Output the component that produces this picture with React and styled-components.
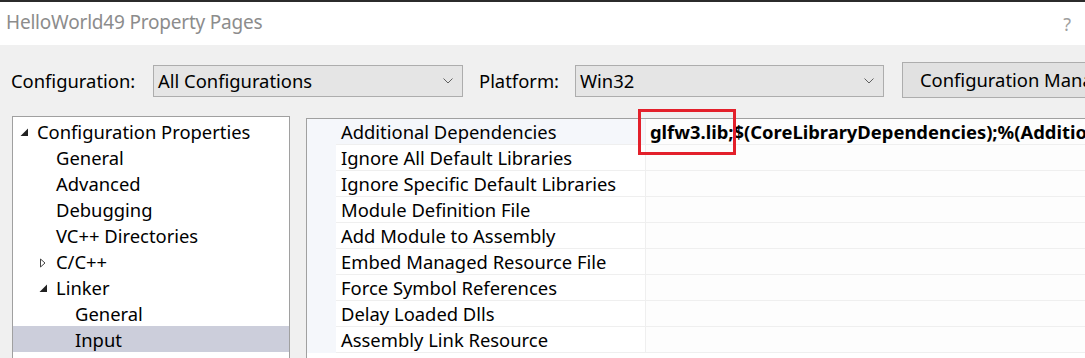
import React from "react";
import styled, { createGlobalStyle } from "styled-components";

const GlobalStyle = createGlobalStyle`
  html, body { margin: 0; padding: 0; background: #f0f0f0; }
  body { font-family: "Noto Sans", "Open Sans", sans-serif; color: #000; }
`;

const Window = styled.div`
  width: 1085px;
  height: 358px;
  overflow: hidden;
  background: #f0f0f0;
  display: flex;
  flex-direction: column;
`;

const TitleBar = styled.div`
  height: 43px;
  flex: none;
  background: #fff;
  border-top: 2px solid #2b2b2b;
  display: flex;
  align-items: center;
  justify-content: space-between;
  padding: 0 14px 0 6px;
`;

const Title = styled.div`
  font-size: 19px;
  letter-spacing: -0.2px;
  color: #8c8c8c;
  margin-top: -3px;
`;

const Help = styled.div`
  font-size: 18px;
  color: #a0a0a0;
`;

const Toolbar = styled.div`
  height: 71px;
  flex: none;
  display: flex;
  align-items: center;
  padding: 0 0 0 11px;
  box-sizing: border-box;
`;

const Label = styled.div`
  font-size: 18.4px;
  width: ${(p) => p.$w}px;
  margin-left: ${(p) => p.$ml || 0}px;
  flex: none;
`;

const Select = styled.div`
  width: ${(p) => p.$w}px;
  height: 32px;
  box-sizing: border-box;
  border: 1px solid #adadad;
  background: #e5e5e5;
  display: flex;
  align-items: center;
  justify-content: space-between;
  padding: 0 9px 0 4px;
  font-size: 18.4px;
  flex: none;
`;

const Button = styled.div`
  margin-left: 18px;
  height: 36px;
  width: 200px;
  box-sizing: border-box;
  border: 1px solid #adadad;
  background: #e1e1e1;
  display: flex;
  align-items: center;
  padding-left: 17px;
  font-size: 18.4px;
  white-space: nowrap;
  flex: none;
  margin-top: -2px;
`;

const Content = styled.div`
  flex: 1;
  display: flex;
  align-items: flex-start;
  padding-left: 12px;
  min-height: 0;
`;

const Tree = styled.div`
  width: 278px;
  height: 260px;
  box-sizing: border-box;
  border: 1px solid #a0a0a0;
  background: #fff;
  padding-top: 1px;
  flex: none;
`;

const TreeRow = styled.div`
  height: 26px;
  display: flex;
  align-items: center;
  font-size: 18.4px;
  padding-left: ${(p) => 7 + p.$level * 19}px;
  background: ${(p) => (p.$selected ? "#cccedb" : "transparent")};
`;

const Toggle = styled.span`
  width: 17px;
  flex: none;
  display: flex;
  align-items: center;
  padding-top: 3px;
`;

const Grid = styled.div`
  margin-left: 16px;
  margin-top: 2px;
  flex: 1;
  min-width: 0;
  height: 260px;
  border-left: 1px solid #a0a0a0;
  border-top: 1px solid #a0a0a0;
  background: #fff;
  display: grid;
  grid-template-columns: 29px 310px minmax(0, 1fr);
  grid-auto-rows: 26px;
  align-content: start;
`;

const Margin = styled.div`
  grid-column: 1;
  grid-row: 1 / span 9;
  background: #f5f7fb;
`;

const NameCell = styled.div`
  grid-column: 2;
  font-size: 18.4px;
  padding-left: 5px;
  display: flex;
  align-items: center;
  border-bottom: 1px solid #efefef;
  border-right: 1px solid #efefef;
  background: ${(p) => (p.$active ? "#f5f7fb" : "#fff")};
  white-space: nowrap;
`;

const ValueCell = styled.div`
  grid-column: 3;
  position: relative;
  font-size: 18.4px;
  font-weight: 700;
  padding-left: 4px;
  display: flex;
  align-items: center;
  border-bottom: 1px solid #efefef;
  white-space: nowrap;
  background: #fdfdfd;
`;

const Highlight = styled.div`
  position: absolute;
  z-index: 2;
  left: -8px;
  top: -10px;
  width: 98px;
  height: 46px;
  box-sizing: border-box;
  border: 3px solid #e3202b;
  pointer-events: none;
`;

const Chevron = () => (
  <svg width="10" height="6" viewBox="0 0 10 6">
    <path d="M0.5 0.5 L5 5 L9.5 0.5" fill="none" stroke="#606060" strokeWidth="1" />
  </svg>
);

const Expanded = () => (
  <svg width="9" height="9" viewBox="0 0 9 9">
    <path d="M8 0.5 L8 8 L0.5 8 Z" fill="#222" />
  </svg>
);

const Collapsed = () => (
  <svg width="8" height="10" viewBox="0 0 8 10">
    <path d="M1.5 1 L6 5 L1.5 9 Z" fill="none" stroke="#444" strokeWidth="1" />
  </svg>
);

const treeItems = [
  { label: "Configuration Properties", level: 0, toggle: "open" },
  { label: "General", level: 1 },
  { label: "Advanced", level: 1 },
  { label: "Debugging", level: 1 },
  { label: "VC++ Directories", level: 1 },
  { label: "C/C++", level: 1, toggle: "closed" },
  { label: "Linker", level: 1, toggle: "open" },
  { label: "General", level: 2 },
  { label: "Input", level: 2, selected: true },
];

const props = [
  "Additional Dependencies",
  "Ignore All Default Libraries",
  "Ignore Specific Default Libraries",
  "Module Definition File",
  "Add Module to Assembly",
  "Embed Managed Resource File",
  "Force Symbol References",
  "Delay Loaded Dlls",
  "Assembly Link Resource",
];

export default function App() {
  return (
    <>
      <GlobalStyle />
      <Window>
        <TitleBar>
          <Title>HelloWorld49 Property Pages</Title>
          <Help>?</Help>
        </TitleBar>
        <Toolbar>
          <Label $w={142}>Configuration:</Label>
          <Select $w={310}>
            <span>All Configurations</span>
            <Chevron />
          </Select>
          <Label $w={96} $ml={16}>Platform:</Label>
          <Select $w={309}>
            <span>Win32</span>
            <Chevron />
          </Select>
          <Button>Configuration Manager...</Button>
        </Toolbar>
        <Content>
          <Tree>
            {treeItems.map((it, i) => (
              <TreeRow key={i} $level={it.level} $selected={it.selected}>
                <Toggle>
                  {it.toggle === "open" && <Expanded />}
                  {it.toggle === "closed" && <Collapsed />}
                </Toggle>
                {it.label}
              </TreeRow>
            ))}
          </Tree>
          <Grid>
            <Margin />
            {props.map((name, i) => (
              <React.Fragment key={name}>
                <NameCell $active={i === 0} style={{ gridRow: i + 1 }}>
                  {name}
                </NameCell>
                <ValueCell style={{ gridRow: i + 1 }}>
                  {i === 0 && (
                    <>
                      glfw3.lib;$(CoreLibraryDependencies);%(AdditionalDependencies)
                      <Highlight />
                    </>
                  )}
                </ValueCell>
              </React.Fragment>
            ))}
          </Grid>
        </Content>
      </Window>
    </>
  );
}
